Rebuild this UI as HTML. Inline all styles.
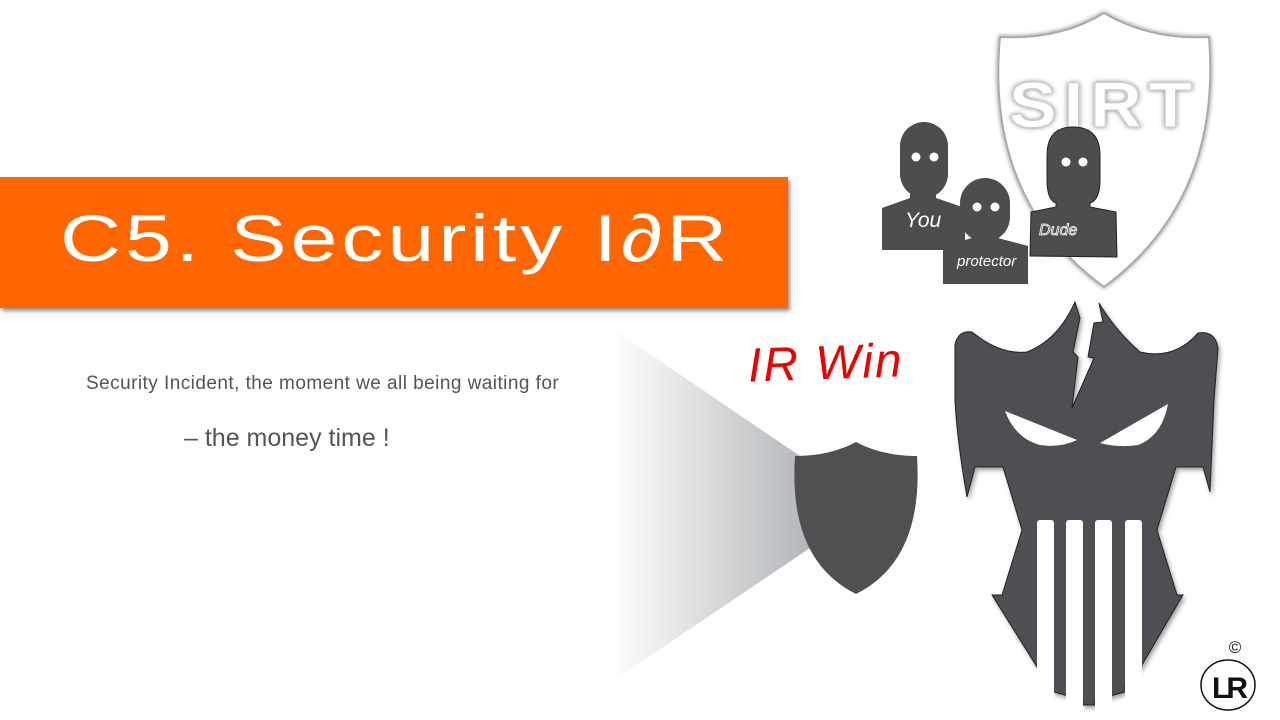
<!DOCTYPE html>
<html><head><meta charset="utf-8">
<style>
html,body{margin:0;padding:0;background:#fff;}
body{width:1280px;height:720px;position:relative;overflow:hidden;font-family:"Liberation Sans",sans-serif;}
.banner{position:absolute;left:0;top:177px;width:788px;height:131px;background:#ff6600;box-shadow:2px 3px 4px rgba(0,0,0,0.45);}
.title{position:absolute;left:60px;top:198px;color:#fff;font-size:66px;line-height:80px;white-space:nowrap;letter-spacing:3px;transform-origin:0 0;transform:scaleX(1.28);}
.t1{position:absolute;left:86px;top:373px;font-size:19px;letter-spacing:0.45px;color:#555;white-space:nowrap;}
.t2{position:absolute;left:184px;top:424px;font-size:25px;color:#555;}
.irwin{position:absolute;left:748px;top:336px;font-size:48px;color:#e00;font-style:italic;transform:rotate(-2deg);letter-spacing:2px;}
</style></head><body>
<div class="banner"></div>
<div class="title">C5. Security I∂R</div>
<div class="t1">Security Incident, the moment we all being waiting for</div>
<div class="t2">– the money time !</div>

<svg width="1280" height="720" style="position:absolute;left:0;top:0">
<defs>
<linearGradient id="cone" x1="0" x2="1" y1="0" y2="0">
<stop offset="0" stop-color="#ffffff"/><stop offset="1" stop-color="#b3b6b9"/>
</linearGradient>
<filter id="sh" x="-10%" y="-10%" width="130%" height="130%"><feDropShadow dx="2" dy="3" stdDeviation="2" flood-color="#000" flood-opacity="0.35"/></filter>
<filter id="sh2" x="-10%" y="-10%" width="130%" height="130%"><feDropShadow dx="0" dy="0" stdDeviation="2.5" flood-color="#000" flood-opacity="0.5"/></filter>
</defs>
<polygon points="610,327 800,456 810,548 610,683" fill="url(#cone)"/>
<path d="M856,442 Q830,456 795,456 Q788,560 856,594 Q924,560 917,456 Q882,456 856,442 Z" fill="#505052"/>

<path d="M1104,13 Q1060,40 1000,37 Q985,200 1104,287 Q1222,200 1209,37 Q1150,40 1104,13 Z" fill="#fff" stroke="#aaa" stroke-width="2" filter="url(#sh2)"/>
<text x="1104" y="127" text-anchor="middle" font-family="Liberation Sans" font-weight="bold" font-size="64" fill="#fff" stroke="#ccc" stroke-width="1" letter-spacing="6" filter="url(#sh2)" transform="translate(1104,0) scale(1.12,1) translate(-1104,0)">SIRT</text>

<g fill="#4d4d4f">
<rect x="900" y="122" width="48" height="76" rx="24"/>
<path d="M910,190 L936,190 L936,198 L965,208 L965,250 L882,250 L882,208 L910,198 Z"/>
<circle cx="916" cy="157" r="4.5" fill="#fff"/><circle cx="934" cy="157" r="4.5" fill="#fff"/>
</g>
<text x="905" y="227" font-size="21" font-style="italic" fill="#fff">You</text>
<g fill="#4d4d4f">
<rect x="960" y="178" width="50" height="64" rx="25"/>
<path d="M972,232 L998,232 L998,238 L1028,246 L1028,284 L943,284 L943,246 L972,238 Z"/>
<circle cx="977" cy="207" r="4.5" fill="#fff"/><circle cx="995" cy="207" r="4.5" fill="#fff"/>
</g>
<text x="957" y="266" font-size="15" font-style="italic" fill="#fff">protector</text>
<g fill="#4d4d4f" stroke="#222" stroke-width="1">
<path d="M1047,155 Q1047,127 1073,127 Q1100,127 1100,155 L1100,180 Q1100,200 1090,203 L1090,207 L1116,212 L1117,257 L1030,256 L1031,212 L1056,207 L1056,203 Q1047,200 1047,180 Z"/>
</g>
<circle cx="1066" cy="162" r="4.5" fill="#fff"/><circle cx="1083" cy="162" r="4.5" fill="#fff"/>
<text x="1039" y="235" font-size="16" font-style="italic" fill="#4d4d4f" stroke="#fff" stroke-width="0.8">Dude</text>

<g filter="url(#sh)">
<path d="M1075,302 L1080,318 L1073,352 L1078,357 L1072,408 L1094,358 L1088,357 L1094,323 L1103,322 L1099,303 Q1115,330 1140,352 Q1175,360 1198,333 Q1215,330 1218,348 L1214,400 L1210,492 L1203,467 L1176,467 L1157,530 L1177,595 L1183,595 L1142,665 L1125,685 L1125,692 L1095,700 L1095,705 L1083,705 L1083,700 L1054,692 L1037,667 L992,595 L1002,595 L1022,530 L1003,467 L975,467 L967,497 Q957,440 955,400 L955,345 Q958,330 972,332 Q1000,355 1027,352 Q1058,340 1075,302 Z" fill="#4e4f52" stroke="#222" stroke-width="1"/>
</g>
<rect x="1037" y="520" width="17" height="200" rx="3" fill="#fff"/>
<rect x="1066" y="520" width="17" height="200" rx="3" fill="#fff"/>
<rect x="1095" y="520" width="17" height="200" rx="3" fill="#fff"/>
<rect x="1125" y="520" width="17" height="200" rx="3" fill="#fff"/>
<path d="M1005,411 L1077,440 Q1060,448 1040,445 Q1015,438 1005,411 Z" fill="#fff"/>
<path d="M1168,404 L1100,443 Q1118,448 1138,445 Q1162,436 1168,404 Z" fill="#fff"/>

<text x="1235" y="653" text-anchor="middle" font-size="17" fill="#111">©</text>
<ellipse cx="1228" cy="685" rx="27" ry="25" fill="#fff" stroke="#111" stroke-width="1.5"/>
<text x="1228" y="698" text-anchor="middle" font-size="30" font-weight="bold" fill="#111" letter-spacing="-4">LR</text>
</svg>

<div class="irwin">IR Win</div>
</body></html>
